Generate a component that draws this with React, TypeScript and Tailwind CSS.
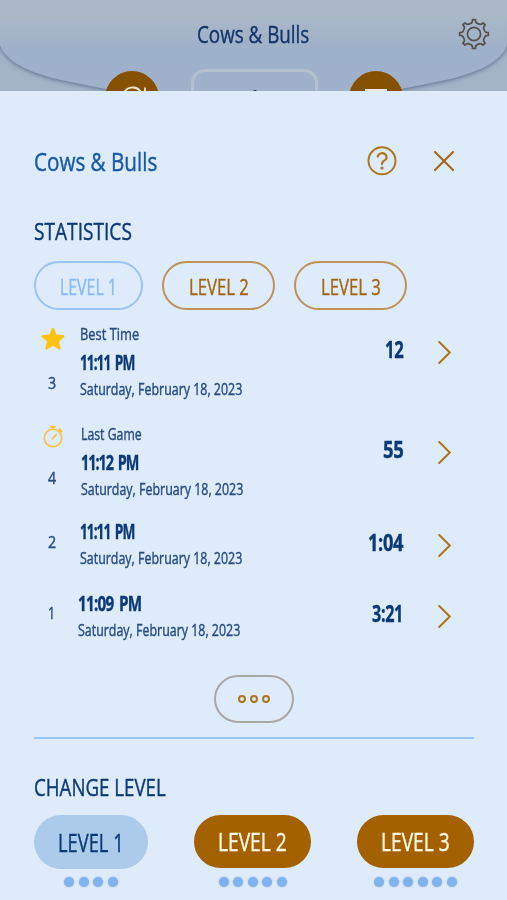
import { useLayoutEffect, useRef, useState } from "react";
import type { ReactNode } from "react";

type Game = {
  id: number;
  label?: string;
  icon?: "star" | "stopwatch";
  time: string;
  date: string;
  score: string;
  rowClass: string;
  textClass: string;
  timeClass: string;
  numberClass: string;
  scoreClass: string;
  scoreWidth: string;
};

const games: Game[] = [
  { id: 3, label: "Best Time", icon: "star", time: "11:11 PM", date: "Saturday, February 18, 2023", score: "12", rowClass: "h-[100px]", textClass: "ml-[46px]", timeClass: "w-[54px] tracking-[-1.5px]", numberClass: "pt-[49px]", scoreClass: "pt-[11px]", scoreWidth: "w-[18px]" },
  { id: 4, label: "Last Game", icon: "stopwatch", time: "11:12 PM", date: "Saturday, February 18, 2023", score: "55", rowClass: "h-[89px]", textClass: "ml-[47px]", timeClass: "w-[57px] tracking-[-1.5px]", numberClass: "pt-[44px]", scoreClass: "pt-[11px]", scoreWidth: "w-[20px]" },
  { id: 2, time: "11:11 PM", date: "Saturday, February 18, 2023", score: "1:04", rowClass: "h-[72px]", textClass: "ml-[46px]", timeClass: "w-[54px] tracking-[-1.5px]", numberClass: "pt-[19px]", scoreClass: "pt-[15px]", scoreWidth: "w-[35px]" },
  { id: 1, time: "11:09 PM", date: "Saturday, February 18, 2023", score: "3:21", rowClass: "h-[90px]", textClass: "ml-[44px]", timeClass: "w-[63px] tracking-[-1px]", numberClass: "pt-[18px]", scoreClass: "pt-[14px]", scoreWidth: "w-[31px]" },
];

const levels = [
  { name: "LEVEL 1", dots: 4, buttonClass: "w-[114px] h-[54px] bg-[#accae9] text-[#0d3a75]", textClass: "w-[66px]" },
  { name: "LEVEL 2", dots: 5, buttonClass: "w-[117px] h-[53px] bg-[#a36100] text-[#fff6e6]", textClass: "w-[69px]" },
  { name: "LEVEL 3", dots: 6, buttonClass: "w-[117px] h-[53px] bg-[#a36100] text-[#fff6e6]", textClass: "w-[69px]" },
];

// Condenses one line of text so that it fills the width of its box.
function Condensed({ className, children }: { className: string; children: ReactNode }) {
  const box = useRef<HTMLSpanElement>(null);
  const text = useRef<HTMLSpanElement>(null);
  const [scale, setScale] = useState(1);

  useLayoutEffect(() => {
    if (box.current && text.current) setScale(box.current.clientWidth / text.current.offsetWidth);
  }, []);

  return (
    <span ref={box} className={`block shrink-0 whitespace-nowrap [-webkit-text-stroke:0.4px_currentColor] ${className}`}>
      <span ref={text} className="inline-block origin-left align-top" style={{ transform: `scaleX(${scale})` }}>
        {children}
      </span>
    </span>
  );
}

function Gear() {
  const points: string[] = [];
  for (let i = 0; i < 8; i++) {
    for (const [offset, r] of [[-14, 11.2], [-8, 12.2], [-6, 14.4], [6, 14.4], [8, 12.2], [14, 11.2]]) {
      const a = ((i * 45 + offset) * Math.PI) / 180;
      points.push(`${(16 + r * Math.sin(a)).toFixed(2)},${(16 - r * Math.cos(a)).toFixed(2)}`);
    }
  }
  return (
    <svg viewBox="0 0 32 32" className="size-8" fill="none" stroke="#55504d" strokeWidth="1.7" strokeLinejoin="round">
      <polygon points={points.join(" ")} />
      <circle cx="16" cy="16" r="6.6" />
    </svg>
  );
}

function Star() {
  return (
    <svg viewBox="0 0 24 24" className="h-6 w-6" fill="#ffc20e" stroke="#ffc20e" strokeWidth="2.4" strokeLinejoin="round">
      <path d="M12 2l2.7 6.8 7.5.5-5.5 4.8 1.7 7.2L12 17.5l-6.4 3.8 1.7-7.2L1.800 9.300l7.500-.5z" />
    </svg>
  );
}

function Stopwatch() {
  return (
    <svg viewBox="0 0 24 24" className="-mt-[2px] h-6 w-6" fill="none" stroke="#f8c340" strokeWidth="1.6" strokeLinecap="round">
      <circle cx="12" cy="13" r="8.7" />
      <path d="M12 4V1.8M11.5 13.6l3.7-4M18 6.9l1.6-1.6" />
      <path d="M10.3 1.9h3.4M18.4 4.2l2 2" strokeWidth="2.2" />
    </svg>
  );
}

function Header() {
  return (
    <header className="relative h-[91px] overflow-hidden bg-[#a3b4c9]">
      <svg viewBox="0 0 507 91" className="absolute inset-0 h-[91px] w-[507px]">
        <defs>
          <linearGradient id="top" x1="0" y1="0" x2="0" y2="1">
            <stop offset="0" stopColor="#abb8c6" />
            <stop offset=".2" stopColor="#abb8c6" />
            <stop offset=".55" stopColor="#9eb1ca" />
            <stop offset="1" stopColor="#a0b2cb" />
          </linearGradient>
          <filter id="shade" x="-10%" y="-20%" width="120%" height="150%">
            <feDropShadow dx="0" dy="1" stdDeviation="2.5" floodColor="#3c5372" floodOpacity=".75" />
          </filter>
        </defs>
        <path d="M-10 -10H517V40H508C506 59 482 71 450 79C412 87 370 96 330 98H177C137 96 95 87 57 79C25 71 1 59 -1 40H-10Z" fill="url(#top)" filter="url(#shade)" />
      </svg>
      <div className="relative flex h-[69px] justify-end">
        <Condensed className="mt-[22px] mr-[198px] w-[112px] text-[24px] leading-6 text-[#12366a]">Cows &amp; Bulls</Condensed>
        <div className="absolute top-[18px] right-[17px]">
          <Gear />
        </div>
      </div>
      <div className="relative flex pl-[105px]">
        <svg viewBox="0 0 54 54" className="mt-[2px] size-[54px]" fill="none">
          <circle cx="27" cy="27" r="27" fill="#855000" />
          <path d="M18 24a10 10 0 0 1 18-3M40 16.5v6h-6" stroke="#eee4d4" strokeWidth="1.8" />
        </svg>
        <div className="ml-8 h-[60px] w-[127px] rounded-[14px] border-[3px] border-[#b3c0cf]">
          <div className="mx-auto mt-[18px] h-3 w-1 rounded-sm bg-[#12366a]" />
        </div>
        <svg viewBox="0 0 54 54" className="mt-[2px] ml-[31px] size-[54px]">
          <circle cx="27" cy="27" r="27" fill="#855000" />
          <path d="M16 18h22v14H16z" fill="#eeeae3" />
        </svg>
      </div>
    </header>
  );
}

function GameRow({ game }: { game: Game }) {
  return (
    <li className={`flex ${game.rowClass}`}>
      <div className={`relative w-0 ${game.numberClass}`}>
        {game.icon && (
          <div className="absolute top-[3px] left-[7px] w-6">{game.icon === "star" ? <Star /> : <Stopwatch />}</div>
        )}
        <Condensed className={`ml-[14px] text-[16px] leading-5 text-[#274c80] ${game.id === 1 ? "w-[7px]" : "w-[8px]"}`}>{game.id}</Condensed>
      </div>
      <div className={`w-[180px] text-[#274c80] ${game.textClass}`}>
        {game.label && (
          <Condensed className={`pt-px text-[15.5px] leading-[19px] ${game.icon === "star" ? "w-[59px]" : "w-[61px]"}`}>{game.label}</Condensed>
        )}
        <Condensed className={`h-[35px] pt-px text-[21px] leading-[35px] font-bold text-[#0d3a75] [word-spacing:3px] ${game.timeClass}`}>{game.time}</Condensed>
        <Condensed className="w-[162px] text-[15.5px] leading-5">{game.date}</Condensed>
      </div>
      <div className={`mr-[23px] ml-auto flex items-start text-[#0d3a75] ${game.scoreClass}`}>
        <Condensed className={`text-[24px] leading-7 font-bold tracking-[-0.5px] ${game.scoreWidth}`}>{game.score}</Condensed>
        <svg viewBox="0 0 13 24" className="mt-[6px] ml-[35px] h-[23px] w-[13px]" fill="none" stroke="#ad741e" strokeWidth="2" strokeLinecap="round">
          <path d="M1 1l11 11L1 23" />
        </svg>
      </div>
    </li>
  );
}

export default function App() {
  return (
    <div className="h-[900px] w-[507px] overflow-hidden bg-[#ddebfa] font-['Open_Sans','Noto_Sans',sans-serif]">
      <Header />
      <main className="pr-[33px] pl-[34px]">
        <div className="flex h-[127px] items-start">
          <Condensed className="mt-[57px] w-[123px] text-[26px] leading-[26px] text-[#1759a8]">Cows &amp; Bulls</Condensed>
          <svg viewBox="0 0 30 30" className="mt-[55px] ml-auto size-[30px]" fill="none" stroke="#ad741e" strokeWidth="1.9" strokeLinecap="round">
            <circle cx="15" cy="14.8" r="13.5" />
            <path d="M10.7 10.5a4.5 4 0 1 1 6.3 4.3q-2 1-2 3.3" strokeWidth="2.2" />
            <circle cx="15" cy="22.1" r=".7" />
          </svg>
          <svg viewBox="0 0 20 20" className="mt-[60px] mr-[20px] ml-[37px] size-[20px]" fill="none" stroke="#a36714" strokeWidth="2" strokeLinecap="round">
            <path d="M1 1l18 18M19 1L1 19" />
          </svg>
        </div>

        <Condensed className="h-[43px] w-[98px] text-[24px] leading-[25px] text-[#0d3a75]">STATISTICS</Condensed>
        <div className="flex gap-[19px]">
          <button className="flex h-[49px] w-[109px] items-center justify-center rounded-full border-2 border-[#9bc4f4] text-[#8bbbf3]">
            <Condensed className="w-[57px] text-[22px] leading-[22px]">LEVEL 1</Condensed>
          </button>
          <button className="flex h-[49px] w-[113px] items-center justify-center rounded-full border-2 border-[#bd935a] text-[#a36714]">
            <Condensed className="w-[60px] text-[22px] leading-[22px]">LEVEL 2</Condensed>
          </button>
          <button className="flex h-[49px] w-[113px] items-center justify-center rounded-full border-2 border-[#bd935a] text-[#a36714]">
            <Condensed className="w-[60px] text-[22px] leading-[22px]">LEVEL 3</Condensed>
          </button>
        </div>

        <ul className="mt-[14px]">
          {games.map((game) => (
            <GameRow key={game.id} game={game} />
          ))}
        </ul>

        <button className="mx-auto flex h-[48px] w-[80px] items-center justify-center gap-[4px] rounded-full border-2 border-[#a9a6a5]">
          <span className="size-[8px] rounded-full border-2 border-[#b0741a]" />
          <span className="size-[8px] rounded-full border-2 border-[#b0741a]" />
          <span className="size-[8px] rounded-full border-2 border-[#b0741a]" />
        </button>

        <hr className="mt-[14px] border-t-2 border-[#9cc6f2]" />

        <Condensed className="mt-[35px] h-[41px] w-[132px] text-[24.5px] leading-[25px] text-[#0d3a75]">CHANGE LEVEL</Condensed>
        <div className="flex justify-between">
          {levels.map((level) => (
            <div key={level.name} className="flex flex-col items-center">
              <button className={`flex items-center justify-center rounded-full ${level.buttonClass}`}>
                <Condensed className={`text-[25px] leading-[25px] ${level.textClass}`}>{level.name}</Condensed>
              </button>
              <div className="mt-auto flex gap-[4.5px] pt-2">
                {Array.from({ length: level.dots }, (_, i) => (
                  <span key={i} className="size-[10px] shrink-0 rounded-full bg-[#80b2f0] shadow-[0_0_2px_#a9b8c8]" />
                ))}
              </div>
            </div>
          ))}
        </div>
      </main>
    </div>
  );
}
